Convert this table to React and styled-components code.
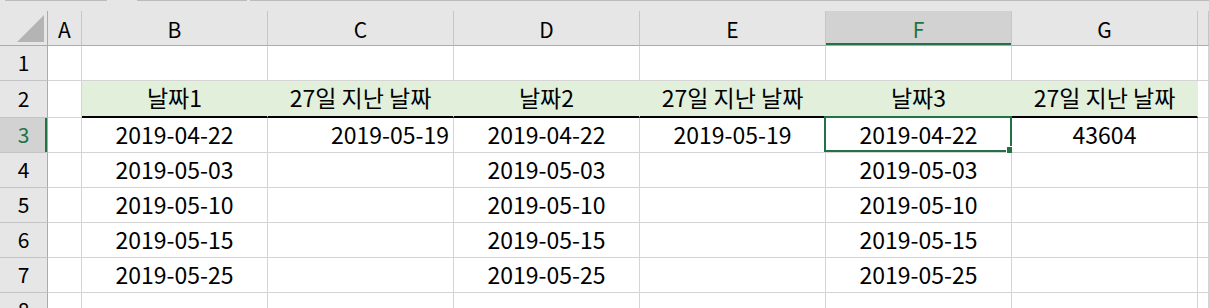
import { Fragment } from "react";
import styled, { createGlobalStyle } from "styled-components";

const GlobalStyle = createGlobalStyle`
  html, body {
    margin: 0;
    padding: 0;
    background: #ffffff;
    overflow: hidden;
  }
  body {
    font-family: "Noto Sans CJK KR", "Noto Sans", sans-serif;
    color: #000000;
  }
`;

const GREEN = "#217346";

const Page = styled.div`
  width: 1209px;
  height: 308px;
  overflow: hidden;
`;

const TopStrip = styled.div`
  display: flex;
  height: 11px;
  background: #e6e6e6;
`;

const TopLine = styled.div`
  height: 1px;
  width: ${({ $w }) => ($w ? `${$w}px` : "auto")};
  margin-left: ${({ $gap }) => $gap}px;
  background: #bcbcbc;
  flex: ${({ $grow }) => ($grow ? 1 : "none")};
`;

const Sheet = styled.div`
  display: grid;
  grid-template-columns: 48px 34px repeat(6, 186px) 1fr;
  grid-template-rows: 35px 35px 37px repeat(6, 35px);
`;

const Corner = styled.div`
  position: relative;
  background: #e6e6e6;
  border-right: 1px solid #ababab;
  border-bottom: 1px solid #ababab;
`;

const Triangle = styled.div`
  position: absolute;
  right: 3px;
  bottom: 3px;
  width: 27px;
  height: 27px;
  background: #b4b4b4;
  clip-path: polygon(100% 0, 100% 100%, 0 100%);
`;

const ColHeader = styled.div`
  display: flex;
  align-items: center;
  justify-content: center;
  background: ${({ $active }) => ($active ? "#d2d2d2" : "#e6e6e6")};
  border-bottom: 1px solid #ababab;
  box-shadow: ${({ $active }) => ($active ? `inset 0 -2px 0 ${GREEN}` : "none")};
  border-right: 1px solid #c6c6c6;
  color: ${({ $active }) => ($active ? GREEN : "#000")};
  font-size: 21px;
  padding-top: 1px;
`;

const RowHeader = styled.div`
  display: flex;
  align-items: center;
  justify-content: center;
  background: ${({ $active }) => ($active ? "#d2d2d2" : "#e6e6e6")};
  border-right: 1px solid #ababab;
  border-bottom: 1px solid #c4c4c4;
  box-shadow: ${({ $active }) => ($active ? `inset -2px 0 0 ${GREEN}` : "none")};
  color: ${({ $active }) => ($active ? GREEN : "#000")};
  font-size: 21px;
  padding-bottom: 2px;
`;

const Cell = styled.div`
  position: relative;
  display: flex;
  align-items: center;
  justify-content: ${({ $align }) =>
    $align === "right" ? "flex-end" : "center"};
  padding: 0 4px 3px;
  background: ${({ $fill }) => ($fill ? "#e2efda" : "#fff")};
  border-right: 1px solid ${({ $fill }) => ($fill ? "#e2efda" : "#d4d4d4")};
  border-bottom: ${({ $thick }) =>
    $thick ? "2px solid #000" : "1px solid #d4d4d4"};
  font-size: 23px;
  white-space: nowrap;
`;

const Selection = styled.div`
  position: absolute;
  left: -2px;
  right: -1px;
  top: -2px;
  bottom: 0;
  border: 2px solid ${GREEN};
  pointer-events: none;
`;

const FillHandle = styled.div`
  position: absolute;
  right: -3px;
  bottom: -3px;
  width: 6px;
  height: 6px;
  background: ${GREEN};
  box-shadow: 0 0 0 1px #fff;
`;

const columns = ["A", "B", "C", "D", "E", "F", "G", ""];
const dates = ["2019-04-22", "2019-05-03", "2019-05-10", "2019-05-15", "2019-05-25"];

const rows = [
  { n: 1, cells: ["", "", "", "", "", "", "", ""] },
  {
    n: 2,
    header: true,
    cells: ["", "날짜1", "27일 지난 날짜", "날짜2", "27일 지난 날짜", "날짜3", "27일 지난 날짜", ""],
  },
  {
    n: 3,
    cells: ["", dates[0], "2019-05-19", dates[0], "2019-05-19", dates[0], "43604", ""],
  },
  ...dates.slice(1).map((d, i) => ({
    n: i + 4,
    cells: ["", d, "", d, "", d, "", ""],
  })),
  { n: 8, cells: ["", "", "", "", "", "", "", ""] },
];

const topSegments = [
  { gap: 5, w: 102 },
  { gap: 30, w: 110 },
  { gap: 3, grow: true },
];

export default function App() {
  return (
    <Page>
      <GlobalStyle />
      <TopStrip>
        {topSegments.map((s, i) => (
          <TopLine key={i} $gap={s.gap} $w={s.w} $grow={s.grow} />
        ))}
      </TopStrip>
      <Sheet>
        <Corner>
          <Triangle />
        </Corner>
        {columns.map((c, i) => (
          <ColHeader key={i} $active={c === "F"}>
            {c}
          </ColHeader>
        ))}
        {rows.map((row) => (
          <Fragment key={row.n}>
            <RowHeader $active={row.n === 3}>{row.n}</RowHeader>
            {row.cells.map((v, ci) => {
              const inTable = ci >= 1 && ci <= 6;
              const selected = row.n === 3 && ci === 5;
              return (
                <Cell
                  key={ci}
                  $fill={row.header && inTable}
                  $thick={row.header && inTable}
                  $align={row.n === 3 && ci === 2 ? "right" : "center"}
                >
                  {v}
                  {selected && (
                    <Selection>
                      <FillHandle />
                    </Selection>
                  )}
                </Cell>
              );
            })}
          </Fragment>
        ))}
      </Sheet>
    </Page>
  );
}
